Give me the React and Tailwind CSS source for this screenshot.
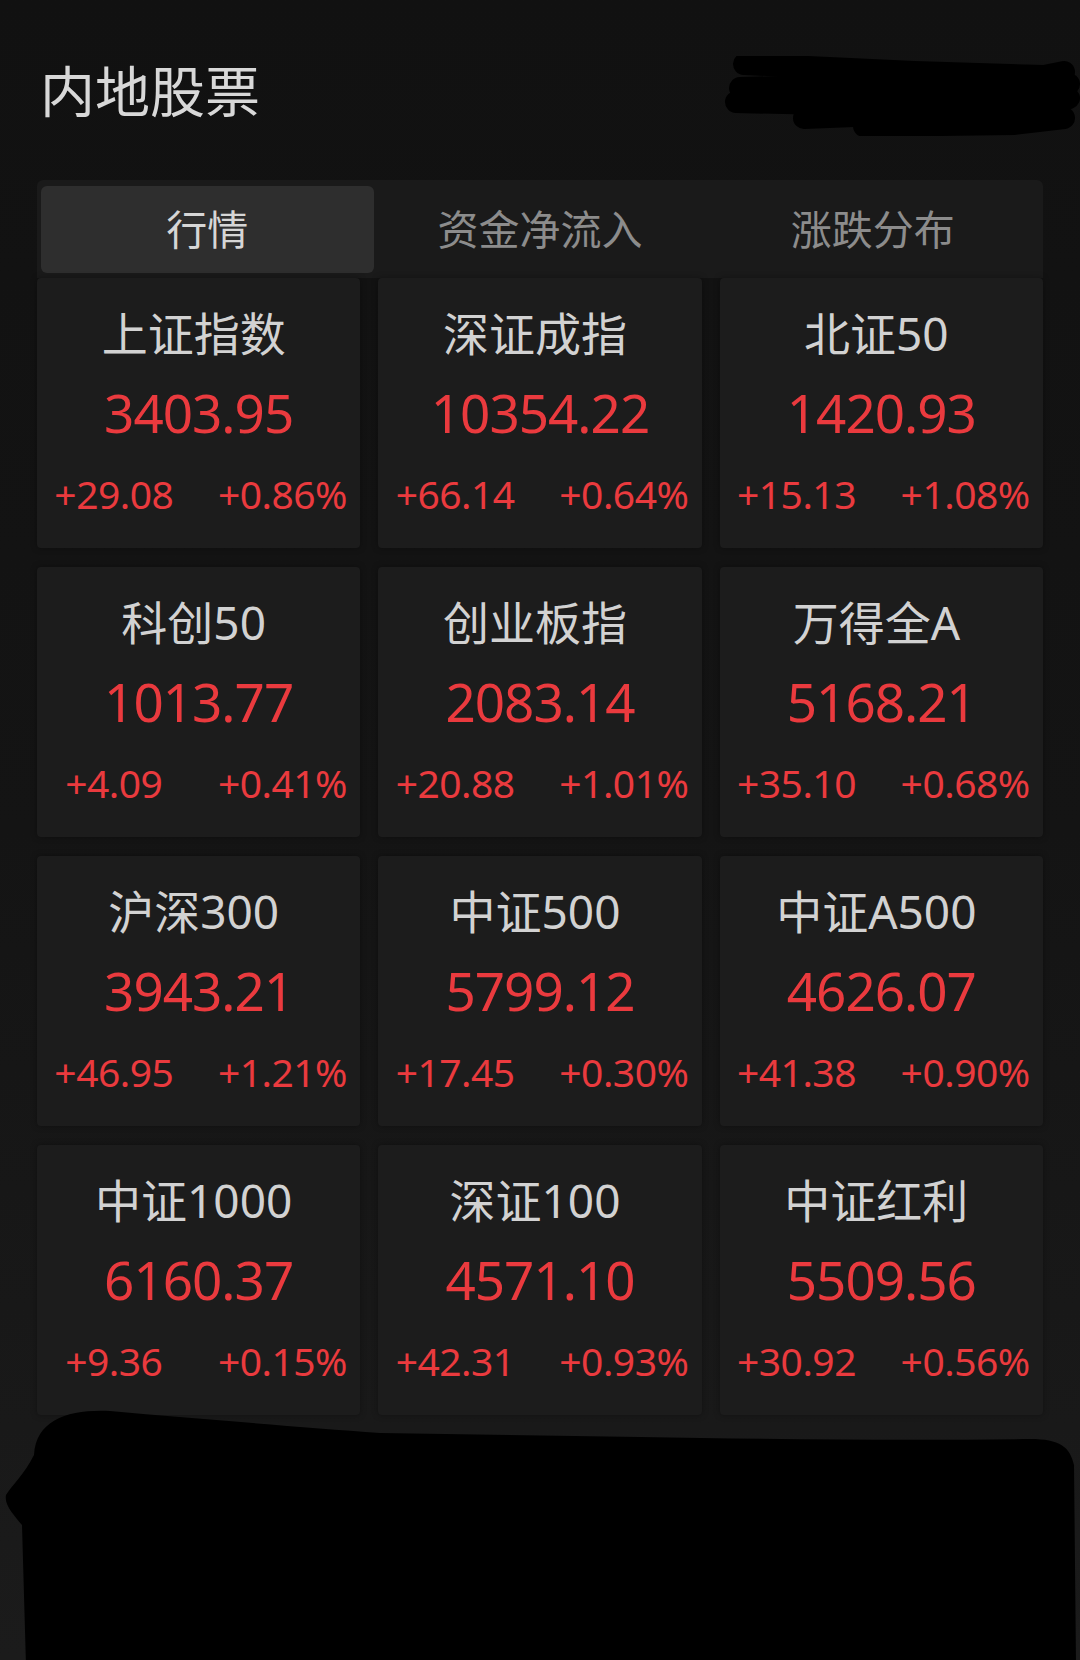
const indices = [
  { name: '上证指数', value: '3403.95', change: '+29.08', pct: '+0.86%' },
  { name: '深证成指', value: '10354.22', change: '+66.14', pct: '+0.64%' },
  { name: '北证50', value: '1420.93', change: '+15.13', pct: '+1.08%' },
  { name: '科创50', value: '1013.77', change: '+4.09', pct: '+0.41%' },
  { name: '创业板指', value: '2083.14', change: '+20.88', pct: '+1.01%' },
  { name: '万得全A', value: '5168.21', change: '+35.10', pct: '+0.68%' },
  { name: '沪深300', value: '3943.21', change: '+46.95', pct: '+1.21%' },
  { name: '中证500', value: '5799.12', change: '+17.45', pct: '+0.30%' },
  { name: '中证A500', value: '4626.07', change: '+41.38', pct: '+0.90%' },
  { name: '中证1000', value: '6160.37', change: '+9.36', pct: '+0.15%' },
  { name: '深证100', value: '4571.10', change: '+42.31', pct: '+0.93%' },
  { name: '中证红利', value: '5509.56', change: '+30.92', pct: '+0.56%' },
];

const tabs = ['行情', '资金净流入', '涨跌分布'];

function IndexCard({ item }) {
  return (
    <div className="h-[270px] bg-[#1c1c1c] rounded-[4px] flex flex-col items-center pt-[32px] shadow-[0_0_6px_rgba(0,0,0,0.35)]">
      <div className="text-[46px] leading-none text-[#d2d2d2] pr-[10px]">{item.name}</div>
      <div className="mt-[30px] text-[53px] leading-none text-[#ea3a3e] tracking-[-1px]">{item.value}</div>
      <div className="mt-[35px] w-full grid grid-cols-2 text-[39px] leading-none text-[#ea3a3e] tracking-[-0.5px]">
        <span className="text-center pr-[8px]">{item.change}</span>
        <span className="text-center pl-[6px]">{item.pct}</span>
      </div>
    </div>
  );
}

export default function App() {
  return (
    <div
      className="w-[1080px] h-[1660px] overflow-hidden bg-gradient-to-b from-[#111111] via-[#141414] to-[#1b1b1b]"
      style={{ fontFamily: '"Noto Sans", "Noto Sans CJK SC", sans-serif' }}
    >
      <div className="flex justify-between pl-[40px] pt-[58px] h-[180px] items-start">
        <h1 className="text-[55px] leading-none font-normal text-[#d8d8d8] mt-[5px]">内地股票</h1>
        <svg width="370" height="80" viewBox="0 0 370 80" className="mt-[-2px] mr-[-4px]">
          <g stroke="#000" strokeLinecap="round" strokeWidth="22" fill="none">
            <path d="M30 8 L 200 16 L 330 20 L 350 16" />
            <path d="M26 32 L 180 28 L 300 30 L 355 28" />
            <path d="M22 46 L 200 50 L 340 48 L 355 42" />
            <path d="M90 62 L 240 56" />
            <path d="M150 70 L 300 68 L 350 62" />
          </g>
        </svg>
      </div>

      <div className="mx-[37px] bg-[#1a1a1a] rounded-t-[6px] px-[4px] pt-[6px] pb-[5px] grid grid-cols-3">
        {tabs.map((t, i) => (
          <div
            key={t}
            className={
              i === 0
                ? 'h-[87px] flex items-center justify-center bg-[#2e2e2e] rounded-[6px] text-[41px] text-[#d6d6d6]'
                : 'h-[87px] flex items-center justify-center text-[41px] text-[#8c8c8c]'
            }
          >
            {t}
          </div>
        ))}
      </div>

      <div className="mx-[37px] grid grid-cols-3 gap-x-[18px] gap-y-[19px]">
        {indices.map((item) => (
          <IndexCard key={item.name} item={item} />
        ))}
      </div>

      <svg width="1080" height="260" viewBox="0 0 1080 260" className="block mt-[-10px]">
        <path
          d="M34 50 C 36 14, 70 4, 110 6 C 200 14, 300 22, 380 28 L 640 32 C 760 34, 900 36, 1030 34 C 1060 34, 1070 42, 1074 60 L 1076 260 L 26 260 L 22 120 C 14 110, 4 100, 6 90 C 12 80, 24 70, 34 50 Z"
          fill="#000"
        />
      </svg>
    </div>
  );
}
